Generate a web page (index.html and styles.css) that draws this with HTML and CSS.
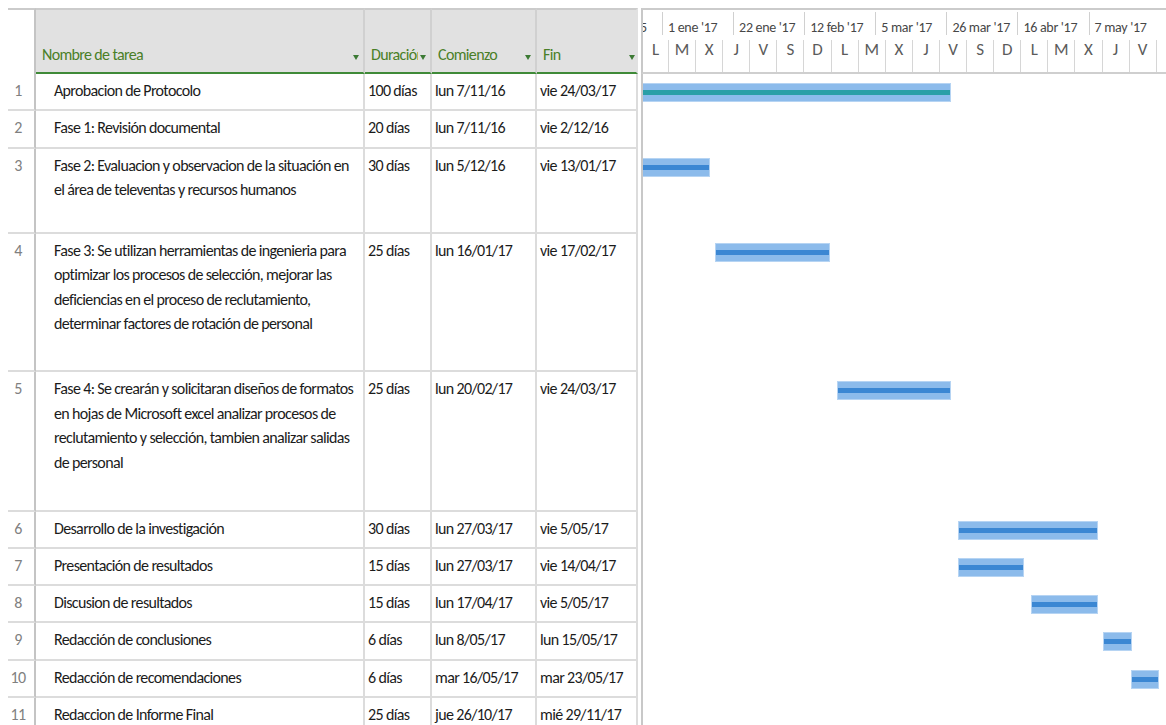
FILE: index.html
```html
<!DOCTYPE html>
<html lang="es">
<head>
<meta charset="utf-8">
<title>Cronograma del proyecto</title>
<link rel="stylesheet" href="styles.css">
</head>
<body>
<div class="chart">

  <div class="row head">
    <div class="cell num"></div>
    <div class="cell hd"><span class="lbl">Nombre de tarea</span><span class="caret"></span></div>
    <div class="cell hd"><span class="lbl">Duración</span><span class="caret"></span></div>
    <div class="cell hd"><span class="lbl">Comienzo</span><span class="caret"></span></div>
    <div class="cell hd end"><span class="lbl">Fin</span><span class="caret"></span></div>
    <div class="gantt scale">
      <div class="tier major">
        <span class="maj lead"><span>5</span></span>
        <span class="maj">1 ene '17</span>
        <span class="maj">22 ene '17</span>
        <span class="maj">12 feb '17</span>
        <span class="maj">5 mar '17</span>
        <span class="maj">26 mar '17</span>
        <span class="maj">16 abr '17</span>
        <span class="maj">7 may '17</span>
      </div>
      <div class="tier minor">
        <span class="min lead">L</span>
        <span class="min">M</span>
        <span class="min">X</span>
        <span class="min">J</span>
        <span class="min">V</span>
        <span class="min">S</span>
        <span class="min">D</span>
        <span class="min">L</span>
        <span class="min">M</span>
        <span class="min">X</span>
        <span class="min">J</span>
        <span class="min">V</span>
        <span class="min">S</span>
        <span class="min">D</span>
        <span class="min">L</span>
        <span class="min">M</span>
        <span class="min">X</span>
        <span class="min">J</span>
        <span class="min">V</span>
      </div>
    </div>
  </div>

  <div class="row">
    <div class="cell num">1</div>
    <div class="cell name">Aprobacion de Protocolo</div>
    <div class="cell">100 días</div>
    <div class="cell">lun 7/11/16</div>
    <div class="cell">vie 24/03/17</div>
    <div class="gantt"><span class="bar teal" style="left:-20px;width:328px"></span></div>
  </div>

  <div class="row">
    <div class="cell num">2</div>
    <div class="cell name">Fase 1: Revisión documental</div>
    <div class="cell">20 días</div>
    <div class="cell">lun 7/11/16</div>
    <div class="cell">vie 2/12/16</div>
    <div class="gantt"></div>
  </div>

  <div class="row two">
    <div class="cell num">3</div>
    <div class="cell name">Fase 2: Evaluacion y observacion de la situación en<br>el área de televentas y recursos humanos</div>
    <div class="cell">30 días</div>
    <div class="cell">lun 5/12/16</div>
    <div class="cell">vie 13/01/17</div>
    <div class="gantt"><span class="bar" style="left:-20px;width:87px"></span></div>
  </div>

  <div class="row four">
    <div class="cell num">4</div>
    <div class="cell name">Fase 3: Se utilizan herramientas de ingenieria para<br>optimizar los procesos de selección, mejorar las<br>deficiencias en el proceso de reclutamiento,<br>determinar factores de rotación de personal</div>
    <div class="cell">25 días</div>
    <div class="cell">lun 16/01/17</div>
    <div class="cell">vie 17/02/17</div>
    <div class="gantt"><span class="bar" style="left:72px;width:115px"></span></div>
  </div>

  <div class="row four alt">
    <div class="cell num">5</div>
    <div class="cell name">Fase 4: Se crearán y solicitaran diseños de formatos<br>en hojas de Microsoft excel analizar procesos de<br>reclutamiento y selección, tambien analizar salidas<br>de personal</div>
    <div class="cell">25 días</div>
    <div class="cell">lun 20/02/17</div>
    <div class="cell">vie 24/03/17</div>
    <div class="gantt"><span class="bar" style="left:194px;width:114px"></span></div>
  </div>

  <div class="row">
    <div class="cell num">6</div>
    <div class="cell name">Desarrollo de la investigación</div>
    <div class="cell">30 días</div>
    <div class="cell">lun 27/03/17</div>
    <div class="cell">vie 5/05/17</div>
    <div class="gantt"><span class="bar" style="left:315px;width:140px"></span></div>
  </div>

  <div class="row">
    <div class="cell num">7</div>
    <div class="cell name">Presentación de resultados</div>
    <div class="cell">15 días</div>
    <div class="cell">lun 27/03/17</div>
    <div class="cell">vie 14/04/17</div>
    <div class="gantt"><span class="bar" style="left:315px;width:66px"></span></div>
  </div>

  <div class="row">
    <div class="cell num">8</div>
    <div class="cell name">Discusion de resultados</div>
    <div class="cell">15 días</div>
    <div class="cell">lun 17/04/17</div>
    <div class="cell">vie 5/05/17</div>
    <div class="gantt"><span class="bar" style="left:388px;width:67px"></span></div>
  </div>

  <div class="row">
    <div class="cell num">9</div>
    <div class="cell name">Redacción de conclusiones</div>
    <div class="cell">6 días</div>
    <div class="cell">lun 8/05/17</div>
    <div class="cell">lun 15/05/17</div>
    <div class="gantt"><span class="bar" style="left:460px;width:29px"></span></div>
  </div>

  <div class="row">
    <div class="cell num">10</div>
    <div class="cell name">Redacción de recomendaciones</div>
    <div class="cell">6 días</div>
    <div class="cell">mar 16/05/17</div>
    <div class="cell">mar 23/05/17</div>
    <div class="gantt"><span class="bar" style="left:488px;width:28px"></span></div>
  </div>

  <div class="row">
    <div class="cell num">11</div>
    <div class="cell name">Redaccion de Informe Final</div>
    <div class="cell">25 días</div>
    <div class="cell">jue 26/10/17</div>
    <div class="cell">mié 29/11/17</div>
    <div class="gantt"></div>
  </div>

</div>
</body>
</html>
```

FILE: styles.css
```css
html, body {
  overflow: hidden;
  background: #ffffff;
}

body {
  margin: 8px 0 0 8px;
  font-family: "Carlito", "Lato", "Liberation Sans", sans-serif;
  font-size: 16px;
  letter-spacing: -0.65px;
  color: #1b1b1b;
}

.chart {
  display: flex;
  flex-direction: column;
}

/* one grid per row, same column template everywhere */
.row {
  display: grid;
  grid-template-columns: 28px 329px 67px 105px 101px 1fr;
  height: 37.3px;
}

.row.two { height: 85px; }
.row.four { height: 138.7px; }
.row.four.alt { height: 139.3px; }

.cell {
  box-sizing: border-box;
  border-right: 2px solid #dcdcdc;
  border-bottom: 2px solid #dcdcdc;
  padding: 5px 3px 0 3px;
  line-height: 24.5px;
  white-space: nowrap;
  overflow: hidden;
}

.cell.name {
  padding-left: 18px;
  padding-right: 0;
}

.cell.num {
  padding: 5px 6px 0 0;
  text-align: center;
  color: #808080;
  border-right-color: #c4c4c4;
}

/* header row */
.row.head {
  height: 66px;
}

.row.head .cell {
  border-top: 2px solid #cbcbcb;
}

.row.head .cell.num {
  border-bottom: none;
}

.cell.hd {
  display: flex;
  align-items: flex-end;
  background: #e1e1e1;
  border-right-color: #d0d0d0;
  border-bottom: 2px solid #3f8a38;
  padding: 0 4px 7px 6px;
  line-height: 20px;
  color: #4a7f28;
}

.cell.hd.end {
  border-right-color: #e1e1e1;
  padding-right: 1px;
}

.hd .lbl {
  flex: 1;
  min-width: 0;
  overflow: hidden;
  white-space: nowrap;
}

.hd .caret {
  flex: none;
  width: 0;
  height: 0;
  margin: 0 0 5px 2px;
  border-left: 3.5px solid transparent;
  border-right: 3.5px solid transparent;
  border-top: 5px solid #3c7a34;
}

/* gantt side */
.gantt {
  margin-left: 3px;
  border-left: 2px solid #c8c8c8;
  position: relative;
  overflow: hidden;
}

.gantt.scale {
  box-sizing: border-box;
  border-top: 2px solid #cbcbcb;
  border-bottom: 2px solid #cfcfcf;
  display: flex;
  flex-direction: column;
}

.tier {
  display: flex;
  white-space: nowrap;
}

.tier.major {
  height: 27px;
}

.maj {
  flex: none;
  box-sizing: border-box;
  width: 71.1px;
  height: 23px;
  margin-top: 2px;
  border-left: 1px solid #d0d0d0;
  padding: 8px 0 0 5px;
  font-size: 14px;
  letter-spacing: -0.3px;
  line-height: 16px;
  color: #474747;
}

.maj.lead {
  width: 19px;
  border-left: none;
  padding-left: 0;
  overflow: hidden;
}

.maj.lead span {
  display: inline-block;
  margin-left: -3px;
}

.tier.minor {
  height: 35px;
}

.min {
  flex: none;
  box-sizing: border-box;
  width: 27.1px;
  height: 32px;
  margin-top: 3px;
  border-right: 1px solid #d6d6d6;
  text-align: center;
  font-size: 17px;
  letter-spacing: 0;
  line-height: 20px;
  color: #5b5b5b;
}

.min.lead {
  width: 26px;
}

/* task bars */
.bar {
  position: absolute;
  top: 9px;
  height: 19px;
  box-sizing: border-box;
  background: #8cbbeb;
  border: 1px solid #b6d4f3;
}

.bar::after {
  content: "";
  position: absolute;
  left: 0;
  right: 0;
  top: 6px;
  height: 5px;
  background: #3b87d3;
}

.bar.teal::after {
  background: #2a9fa7;
}
```
